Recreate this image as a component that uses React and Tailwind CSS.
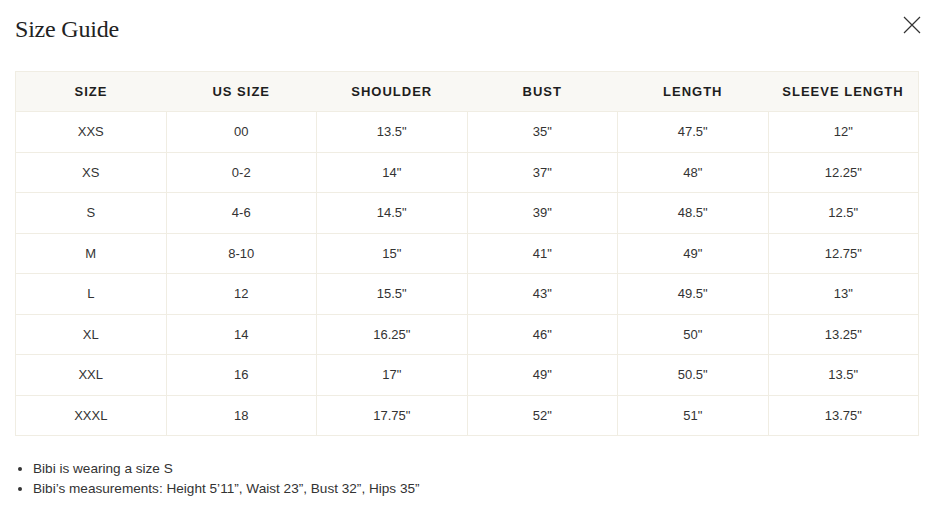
import React from "react";

const headers = ["SIZE", "US SIZE", "SHOULDER", "BUST", "LENGTH", "SLEEVE LENGTH"];
const rows = [
  ["XXS", "00", "13.5\"", "35\"", "47.5\"", "12\""],
  ["XS", "0-2", "14\"", "37\"", "48\"", "12.25\""],
  ["S", "4-6", "14.5\"", "39\"", "48.5\"", "12.5\""],
  ["M", "8-10", "15\"", "41\"", "49\"", "12.75\""],
  ["L", "12", "15.5\"", "43\"", "49.5\"", "13\""],
  ["XL", "14", "16.25\"", "46\"", "50\"", "13.25\""],
  ["XXL", "16", "17\"", "49\"", "50.5\"", "13.5\""],
  ["XXXL", "18", "17.75\"", "52\"", "51\"", "13.75\""],
];

export default function App() {
  return (
    <div className="w-[935px] h-[528px] bg-white px-[15px] pt-[14px]" style={{ fontFamily: '"Liberation Sans", Arial, sans-serif' }}>
      <div className="flex items-start justify-between">
        <h1 className="text-[24px] leading-[30px] text-[#222] font-normal" style={{ fontFamily: '"Liberation Serif", "Times New Roman", serif', letterSpacing: "-0.2px" }}>
          Size Guide
        </h1>
        <button className="mt-[2px] mr-[-1px] w-[18px] h-[18px] flex items-center justify-center text-[#333]">
          <svg width="18" height="18" viewBox="0 0 18 18" fill="none" stroke="currentColor" strokeWidth="1.2">
            <path d="M1 1L17 17M17 1L1 17" />
          </svg>
        </button>
      </div>
      <table className="mt-[27px] w-[904px] table-fixed border-collapse border border-[#f0ede3]">
        <thead>
          <tr className="bg-[#f9f8f4] h-[40px]">
            {headers.map((h) => (
              <th key={h} className="text-[13px] font-bold tracking-[1px] text-[#1e1e1e] text-center align-middle pt-[1px]">
                {h}
              </th>
            ))}
          </tr>
        </thead>
        <tbody>
          {rows.map((r, i) => (
            <tr key={i} className="h-[40.5px] border-t border-[#f0ede3]">
              {r.map((c, j) => (
                <td key={j} className={`text-[13px] text-[#333] text-center align-middle ${j > 0 ? "border-l border-[#f0ede3]" : ""}`}>
                  {c}
                </td>
              ))}
            </tr>
          ))}
        </tbody>
      </table>
      <ul className="mt-[23px] list-disc pl-[18px] text-[13.6px] leading-[20px] text-[#333]">
        <li>Bibi is wearing a size S</li>
        <li>Bibi’s measurements: Height 5’11”, Waist 23”, Bust 32”, Hips 35”</li>
      </ul>
    </div>
  );
}
